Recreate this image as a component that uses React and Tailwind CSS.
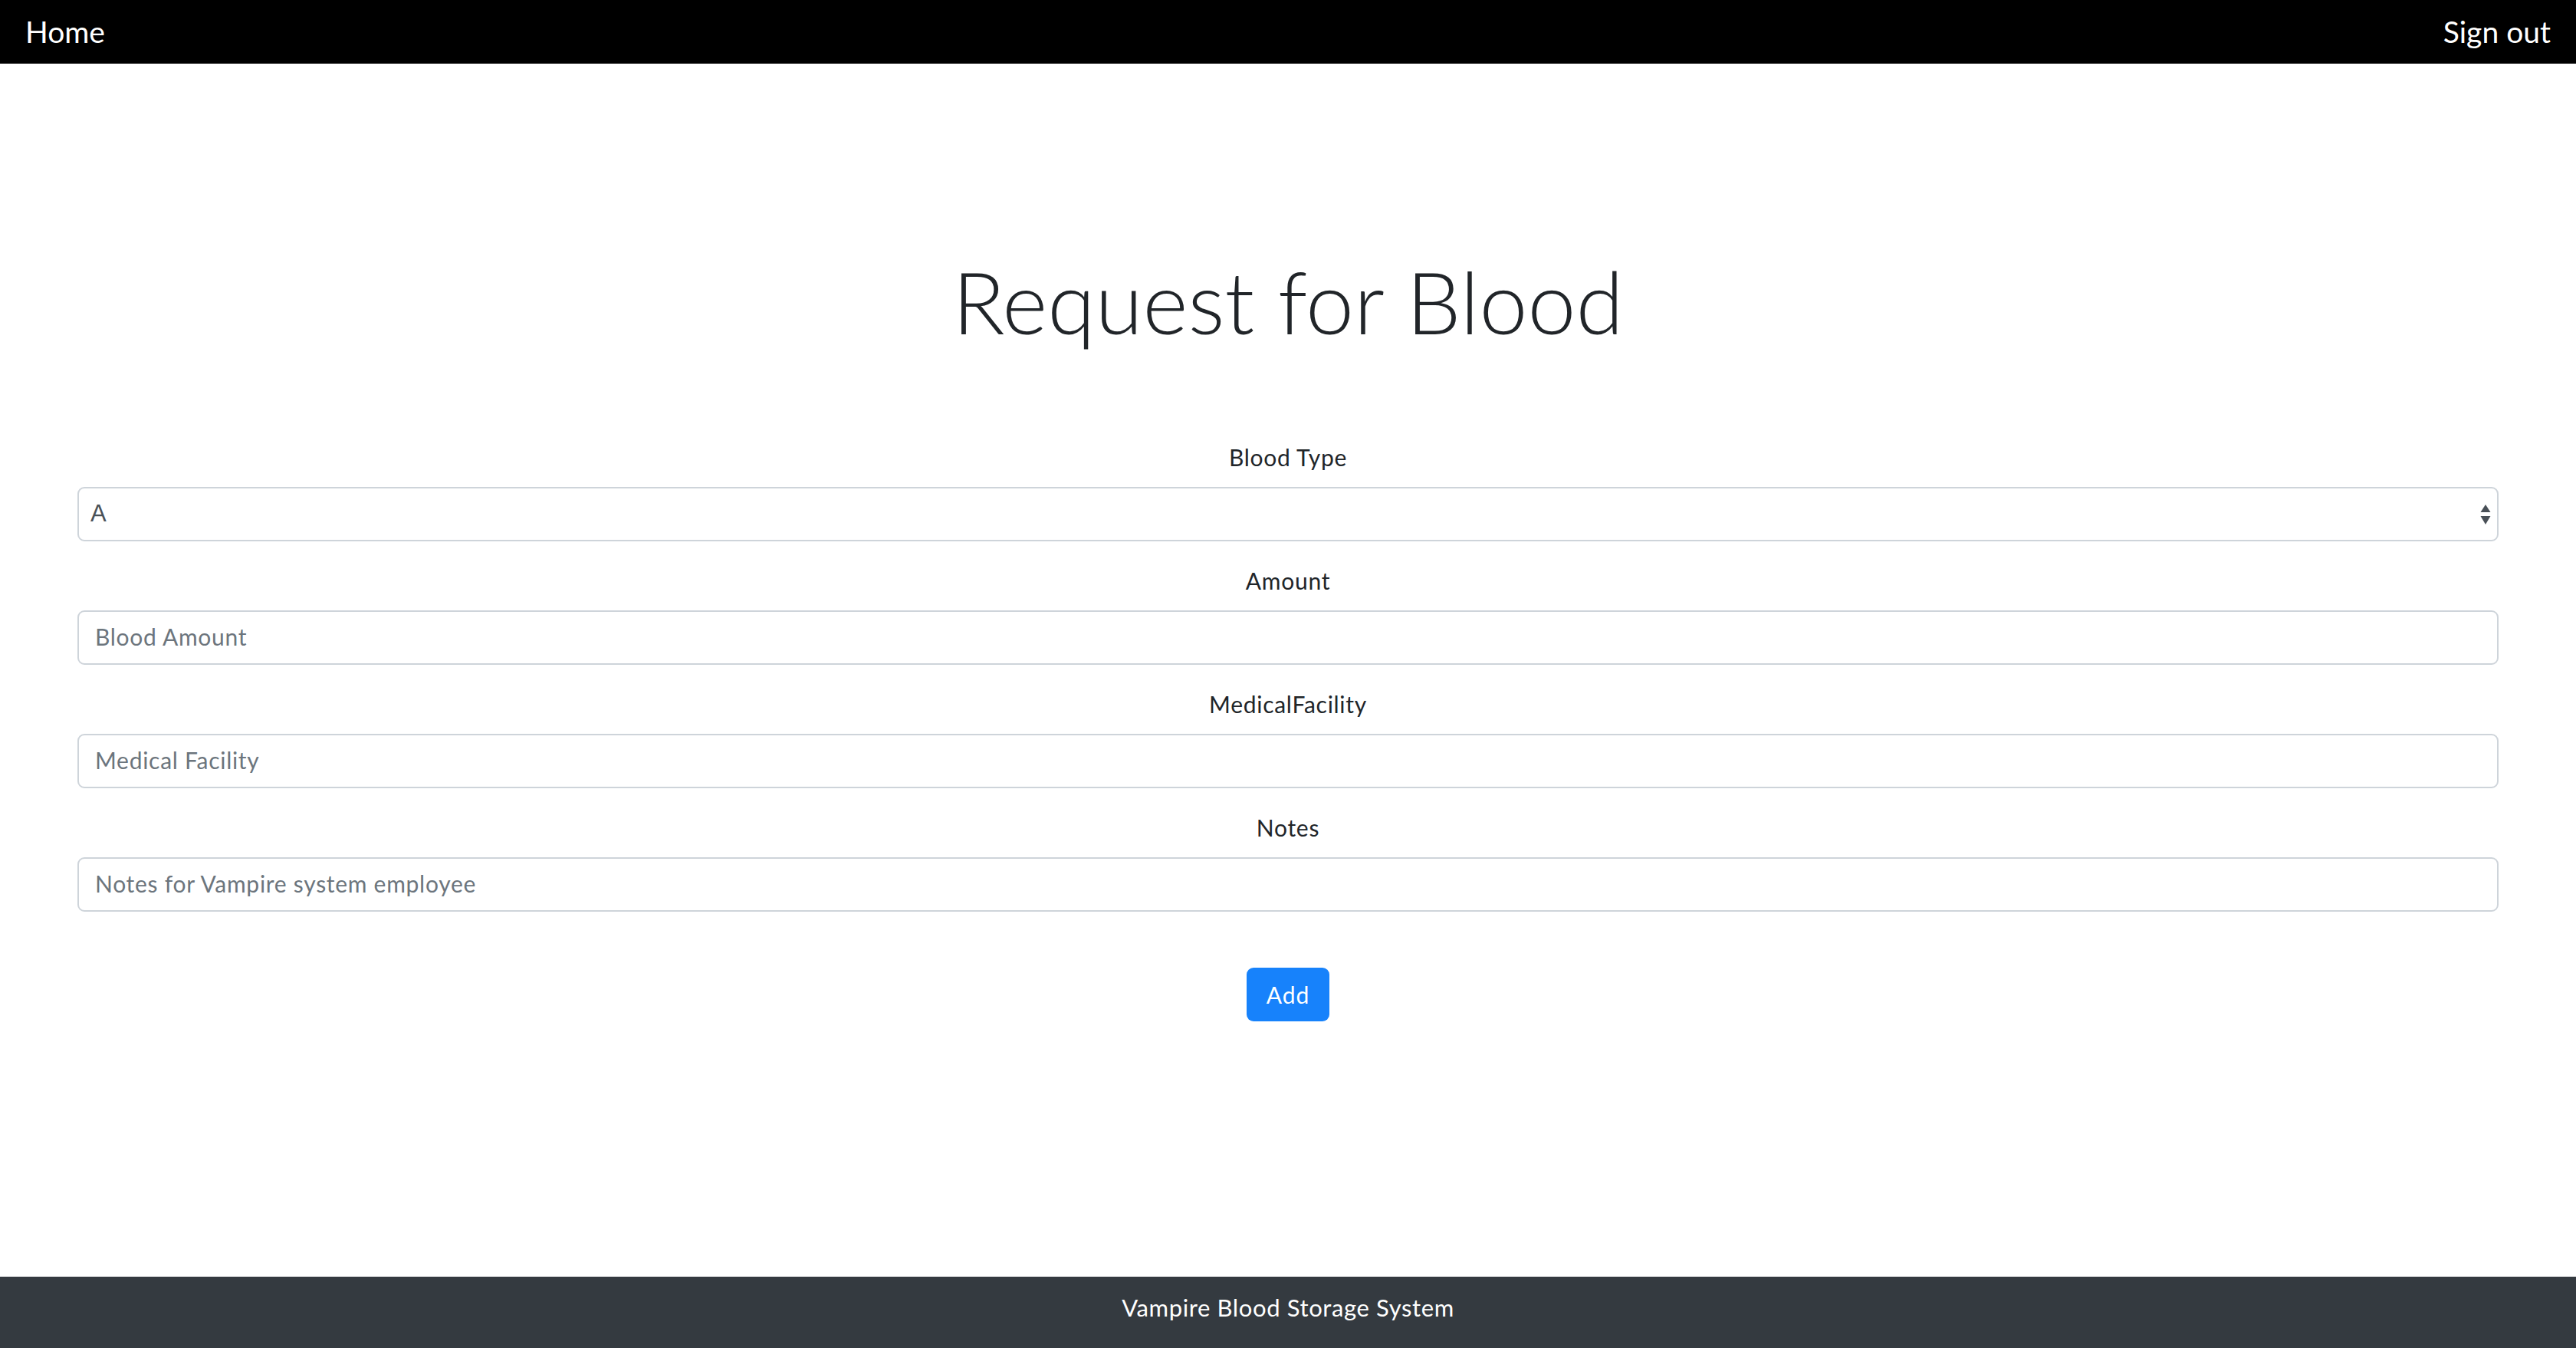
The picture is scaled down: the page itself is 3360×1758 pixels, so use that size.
import React, { useState } from 'react';

const fields = [
  { label: 'Amount', placeholder: 'Blood Amount' },
  { label: 'MedicalFacility', placeholder: 'Medical Facility' },
  { label: 'Notes', placeholder: 'Notes for Vampire system employee' },
];

const SelectArrows = () => (
  <svg
    className="pointer-events-none absolute right-[10px] top-1/2 -translate-y-1/2"
    width="14"
    height="28"
    viewBox="0 0 14 28"
    fill="#495057"
  >
    <polygon points="7,1 13.5,11 0.5,11" />
    <polygon points="0.5,16 13.5,16 7,27" />
  </svg>
);

const App = () => {
  const [bloodType, setBloodType] = useState('A');

  return (
    <div className="min-h-screen flex flex-col bg-white font-['Lato',sans-serif] text-[#212529] tracking-[0.045em]">
      <nav className="h-[83px] bg-black flex items-center justify-between px-[33px] tracking-normal">
        <a href="#" className="text-white text-[39px] leading-none">Home</a>
        <a href="#" className="text-white text-[39px] leading-none">Sign out</a>
      </nav>

      <main className="flex-1 px-[101px] pt-[241px]">
        <h1 className="text-center text-[113px] leading-[136px] font-light tracking-normal">
          Request for Blood
        </h1>

        <form className="mt-[114px]" onSubmit={(e) => e.preventDefault()}>
          <div className="mb-[29px]">
            <label className="block text-center text-[30px] leading-[45px] mb-[16px]">
              Blood Type
            </label>
            <div className="relative">
              <select
                value={bloodType}
                onChange={(e) => setBloodType(e.target.value)}
                className="appearance-none w-full h-[71px] border-2 border-[#ced4da] rounded-[9px] bg-white pl-[15px] pr-[40px] text-[31px] text-[#495057] font-['Liberation_Sans',sans-serif] tracking-normal outline-none"
              >
                <option value="A">A</option>
                <option value="B">B</option>
                <option value="AB">AB</option>
                <option value="O">O</option>
              </select>
              <SelectArrows />
            </div>
          </div>

          {fields.map((f) => (
            <div key={f.label} className="mb-[29px] last:mb-0">
              <label className="block text-center text-[30px] leading-[45px] mb-[16px]">
                {f.label}
              </label>
              <input
                type="text"
                placeholder={f.placeholder}
                className="w-full h-[71px] border-2 border-[#ced4da] rounded-[9px] bg-white px-[21px] pb-[3px] text-[30px] text-[#495057] placeholder:text-[#6c757d] outline-none"
              />
            </div>
          ))}

          <div className="flex justify-center mt-[73px]">
            <button
              type="submit"
              className="w-[108px] h-[70px] rounded-[9px] bg-[#1782fb] text-white text-[30px] tracking-[0.03em]"
            >
              Add
            </button>
          </div>
        </form>
      </main>

      <footer className="h-[93px] bg-[#343a40] flex items-center justify-center pb-[12px]">
        <span className="text-white text-[31px] tracking-[0.02em]">Vampire Blood Storage System</span>
      </footer>
    </div>
  );
};

export default App;
